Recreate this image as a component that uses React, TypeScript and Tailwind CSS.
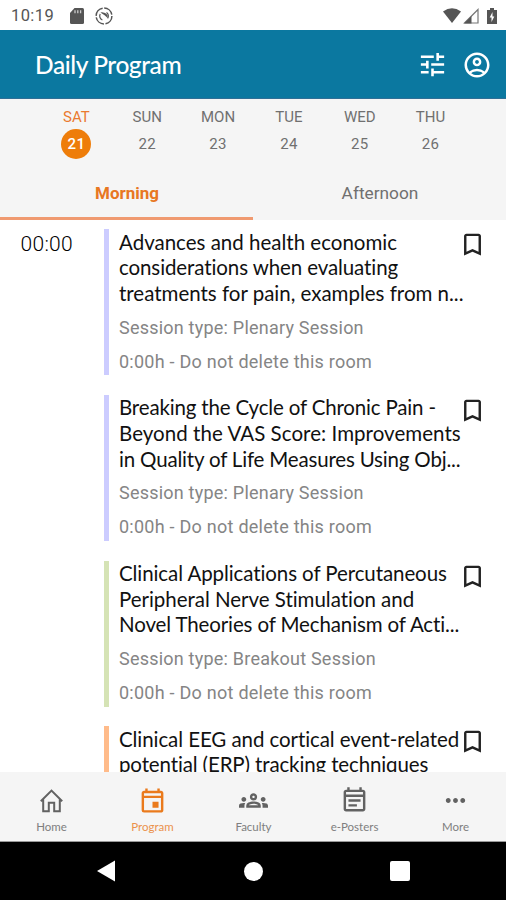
import React from "react";
import {
  MdTune,
  MdOutlineAccountCircle,
  MdBookmarkBorder,
  MdOutlineEvent,
  MdOutlineEventNote,
  MdMoreHoriz,
  MdOutlineGroups,
} from "react-icons/md";

const days = [
  { name: "SAT", date: "21", active: true },
  { name: "SUN", date: "22" },
  { name: "MON", date: "23" },
  { name: "TUE", date: "24" },
  { name: "WED", date: "25" },
  { name: "THU", date: "26" },
];

type Line = { text: string; tracking: string };

const sessions: { bar: string; lines: Line[]; type?: string }[] = [
  {
    bar: "bg-[#ccccff]",
    type: "Plenary Session",
    lines: [
      { text: "Advances and health economic", tracking: "tracking-normal" },
      { text: "considerations when evaluating", tracking: "tracking-[-0.1px]" },
      { text: "treatments for pain, examples from n...", tracking: "tracking-[-0.01px]" },
    ],
  },
  {
    bar: "bg-[#ccccff]",
    type: "Plenary Session",
    lines: [
      { text: "Breaking the Cycle of Chronic Pain -", tracking: "tracking-[-0.17px]" },
      { text: "Beyond the VAS Score: Improvements", tracking: "tracking-[0.05px]" },
      { text: "in Quality of Life Measures Using Obj...", tracking: "tracking-[-0.18px]" },
    ],
  },
  {
    bar: "bg-[#d5e3b5]",
    type: "Breakout Session",
    lines: [
      { text: "Clinical Applications of Percutaneous", tracking: "tracking-[-0.09px]" },
      { text: "Peripheral Nerve Stimulation and", tracking: "tracking-[-0.03px]" },
      { text: "Novel Theories of Mechanism of Acti...", tracking: "tracking-[-0.13px]" },
    ],
  },
  {
    bar: "bg-[#ffbb8a]",
    lines: [
      { text: "Clinical EEG and cortical event-related", tracking: "tracking-[-0.08px]" },
      { text: "potential (ERP) tracking techniques", tracking: "tracking-[-0.13px]" },
    ],
  },
];

function HomeIcon({ className }: { className?: string }) {
  return (
    <svg viewBox="0 0 29 29" className={className} fill="none" stroke="currentColor" strokeWidth="2">
      <path d="M3.8 15.2L14.5 4.6l10.7 10.6M6.2 13v12.2h5.6v-8.4h5.4v8.4h5.6V13" />
    </svg>
  );
}

const tabs = [
  { label: "Home", Icon: HomeIcon },
  { label: "Program", Icon: MdOutlineEvent, active: true },
  { label: "Faculty", Icon: MdOutlineGroups },
  { label: "e-Posters", Icon: MdOutlineEventNote },
  { label: "More", Icon: MdMoreHoriz },
];

function StatusBar() {
  return (
    <div className="flex h-[30px] shrink-0 items-center bg-white pl-[11px] pr-[9px] pt-px text-[#555]">
      <span className="w-[59px] pt-px text-[16.5px] tracking-[0.4px]">10:19</span>
      <svg viewBox="0 0 14 16" className="h-[16px] w-[14px]">
        <path d="M4.5 0H12.5Q14 0 14 1.5V14.5Q14 16 12.5 16H1.5Q0 16 0 14.5V5z" fill="#555" />
        <path d="M5 2.2v3M7.8 2.2v3M10.6 2.2v3" stroke="#ccc" strokeWidth="1.3" />
      </svg>
      <svg viewBox="0 0 18 18" className="ml-[11px] size-[18px]" fill="none" stroke="#555">
        <circle cx="9" cy="9" r="7.9" strokeWidth="1.5" strokeDasharray="10.8 1.6" />
        <path d="M7.4 13A4.3 4.3 0 0 1 5.2 7M11.5 5.4A4.3 4.3 0 0 1 12.6 11.4" strokeWidth="1.2" />
        <path d="M5.4 5.4Q10 4.6 12.6 8V11L9.6 8.2z" fill="#555" stroke="none" />
      </svg>
      <div className="ml-auto flex items-center">
        <svg viewBox="0 0 18 15" className="h-[15px] w-[18px]" fill="#555">
          <path d="M0 3.5Q9-3 18 3.5L9 15z" />
        </svg>
        <svg viewBox="0 0 16 16" className="ml-[2px] size-[16px]">
          <path d="M1.5 15H15V1.5z" fill="none" stroke="#777" strokeWidth="1.2" />
          <path d="M1 15.5h7.5V8z" fill="#555" />
        </svg>
        <svg viewBox="0 0 10 16" className="ml-[8px] h-[16px] w-[10px]">
          <path d="M3 0h4v2h3v14H0V2h3z" fill="#555" />
          <path d="M5.5 4L2.7 9.5h1.8V14l2.8-5.5H5.5z" fill="#fff" />
        </svg>
      </div>
    </div>
  );
}

export default function App() {
  return (
    <div className="flex h-[900px] w-[506px] flex-col overflow-hidden bg-white font-['Roboto',sans-serif]">
      <StatusBar />
      <header className="flex h-[69px] shrink-0 items-center border-b border-[#2f6f96] bg-[#0b78a0] pl-[35px] pr-[14px] pt-px text-white">
        <h1 className="pt-px font-['Lato',sans-serif] text-[24.5px] font-medium tracking-[-0.42px] whitespace-nowrap">
          Daily Program
        </h1>
        <MdTune className="ml-auto size-[31px]" />
        <MdOutlineAccountCircle className="ml-[14px] size-[30px]" />
      </header>

      <section className="flex h-[121px] shrink-0 flex-col bg-[#f5f5f5] text-[#707070]">
        <div className="flex h-[70px] pl-[41px] pr-[40px] pt-[8px]">
          {days.map((d) => (
            <div key={d.name} className="flex flex-1 flex-col items-center">
              <span className={`text-[15px] leading-[20px] ${d.active ? "text-[#ea7a30]" : ""}`}>{d.name}</span>
              <span
                className={`mt-[2px] flex size-[30px] items-center justify-center rounded-full text-[15px] tracking-[0.3px] ${
                  d.active ? "bg-[#ee7d0a] font-medium text-white" : "pt-px"
                }`}
              >
                {d.date}
              </span>
            </div>
          ))}
        </div>
        <div className="flex h-[51px] text-[17.3px]">
          <div className="flex flex-1 items-center justify-center border-b-[3px] border-[#f09a70] pl-px pt-[2px] text-[17px] font-bold text-[#e87722]">
            Morning
          </div>
          <div className="flex flex-1 items-center justify-center pb-px pl-px">Afternoon</div>
        </div>
      </section>

      <main className="flex h-[552px] shrink-0 overflow-hidden pt-[9.4px]">
        <div className="w-[104px] shrink-0 pl-[20.5px] pt-[2px] text-[21px] font-light leading-[26px] tracking-[0.3px] text-black">
          00:00
        </div>
        <div className="flex flex-1 flex-col gap-[19.6px]">
          {sessions.map((s) => (
            <article key={s.lines[0].text} className="flex h-[146px] shrink-0">
              <div className={`w-[5px] shrink-0 ${s.bar}`} />
              <div className="w-[349px] shrink-0 whitespace-nowrap pl-[10px] pt-[0.5px]">
                <h2 className="font-['Lato',sans-serif] text-[20.5px] leading-[25.6px] text-[#111] [font-variant-ligatures:none]">
                  {s.lines.map((l) => (
                    <span key={l.text} className={`block ${l.tracking}`}>
                      {l.text}
                    </span>
                  ))}
                </h2>
                {s.type && (
                  <>
                    <p className="mt-[9px] text-[18px] leading-[24px] tracking-[0.22px] text-[#858585]">
                      Session type: {s.type}
                    </p>
                    <p className="mt-[10px] text-[18px] leading-[24px] tracking-[0.25px] text-[#858585]">
                      0:00h - Do not delete this room
                    </p>
                  </>
                )}
              </div>
              <MdBookmarkBorder className="mt-px size-[29px] shrink-0 text-[#222]" />
            </article>
          ))}
        </div>
      </main>

      <nav className="flex h-[70px] shrink-0 border-b border-[#999] bg-[#f5f5f5] pl-px font-['Lato',sans-serif]">
        {tabs.map(({ label, Icon, active }) => (
          <div
            key={label}
            className={`flex flex-1 flex-col items-center pt-[14px] ${active ? "text-[#ea7a1c]" : "text-[#626262]"}`}
          >
            <Icon className="size-[29px]" />
            <span className="mt-[4px] text-[11.5px] leading-[15px] opacity-80">{label}</span>
          </div>
        ))}
      </nav>

      <div className="flex flex-1 items-center justify-around bg-black px-[33px]">
        <svg viewBox="0 0 22 22" className="size-[22px]" fill="#fff">
          <path d="M1 11L19 0.5v21z" />
        </svg>
        <div className="size-[19px] rounded-full bg-white" />
        <div className="size-[20px] rounded-[2px] bg-white" />
      </div>
    </div>
  );
}
